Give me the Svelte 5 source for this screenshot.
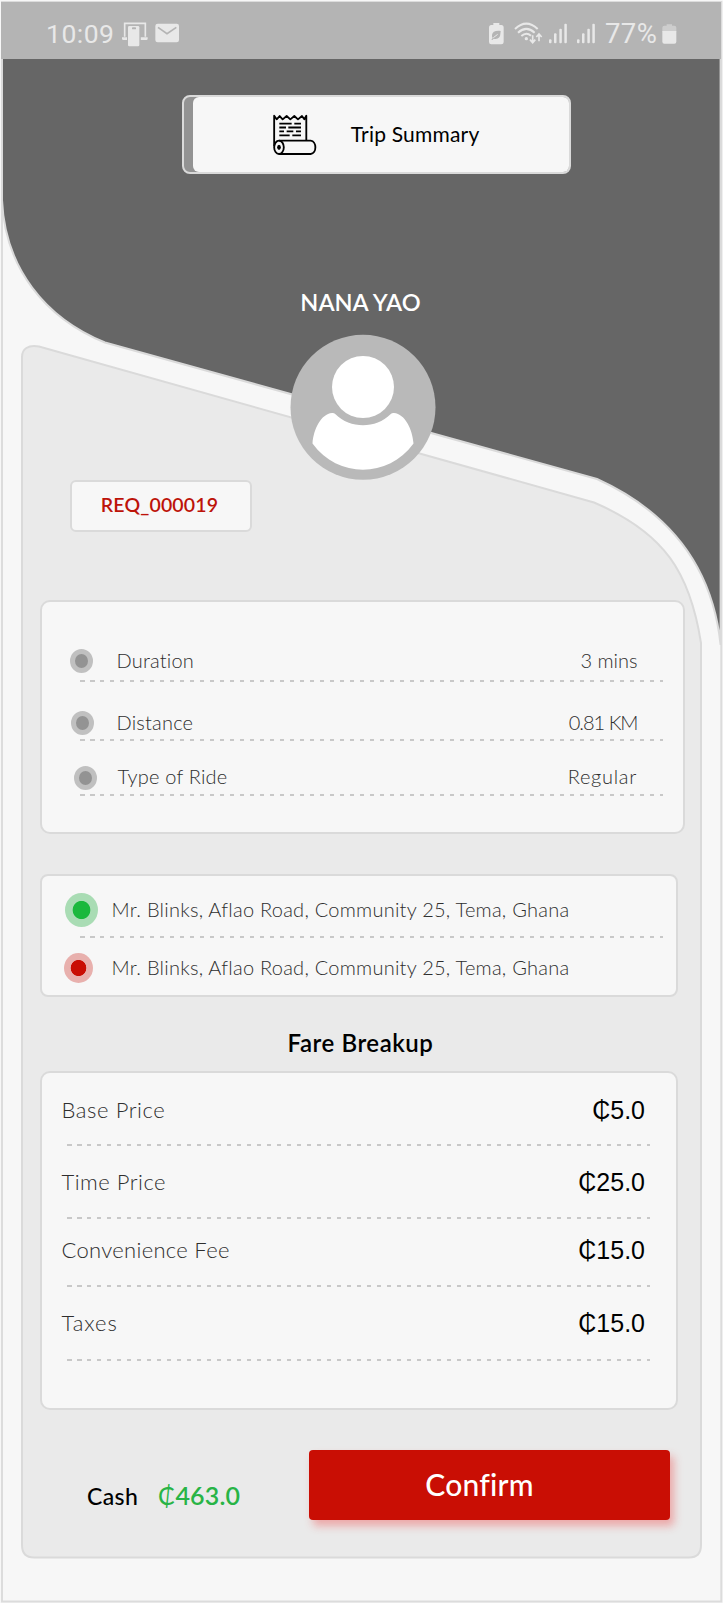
<script>
  const details = [
    { label: 'Duration', value: '3 mins', before: 47, after: 7, dot: 28, text: 12.5, end: 45.5, labelGap: 0.2, valueGap: 0 },
    { label: 'Distance', value: '0.81 KM', before: 29, after: 4, dot: 29, text: 11.5, end: 45.5, labelGap: 0.2, valueGap: -1 },
    { label: 'Type of Ride', value: 'Regular', before: 24, after: 5, dot: 32, text: 9.5, end: 46, labelGap: 0.2, valueGap: 0.7 },
  ];
  const stops = [
    { kind: 'pickup', address: 'Mr. Blinks, Aflao Road, Community 25, Tema, Ghana' },
    { kind: 'dropoff', address: 'Mr. Blinks, Aflao Road, Community 25, Tema, Ghana' },
  ];
  const fares = [
    { label: 'Base Price', value: '5.0', before: 23, after: 20, gap: 0.6 },
    { label: 'Time Price', value: '25.0', before: 22, after: 21, gap: 0.5 },
    { label: 'Convenience Fee', value: '15.0', before: 17, after: 21, gap: 0.3 },
    { label: 'Taxes', value: '15.0', before: 22, after: 22, gap: 1 },
  ];
  const signal = [
    [267, 117, 12],
    [282, 99, 30],
    [298, 85, 44],
    [313, 70, 59],
  ];
</script>

<main class="page">
  <svg class="backdrop" width="723" height="1603" viewBox="0 0 723 1603" aria-hidden="true">
    <rect x="2" y="2" width="719.3" height="1599.5" fill="#f7f7f7" stroke="#dcdcdc" stroke-width="2" />
    <path
      d="M2 50V200C5 268 45 318 105 342.5L597 479C665 510 712 562 720.6 645V50Z"
      fill="#666" stroke="#dadada" stroke-width="2" />
    <path
      d="M22 357C22 349 28 344.5 39 346.5L594 502.5C665 533 690 573 701 643V1545Q701 1557.5 689 1557.5H34Q22 1557.5 22 1545Z"
      fill="#eaeaea" stroke="#dadada" stroke-width="2" />
  </svg>

  <header class="status">
    <span class="clock">10:09</span>
    <svg class="left-icons" width="60" height="26" viewBox="363 65 180 78">
      <path d="M374 112V72H436V112" fill="none" stroke="#e8e8e8" stroke-width="5" />
      <path d="M366 114H386V122H370Q366 122 366 118ZM422 114H443V118Q443 122 439 122H422Z" fill="#e8e8e8" />
      <rect x="381" y="77" width="40" height="66" rx="4" fill="#b4b4b4" />
      <rect x="384" y="80" width="34" height="61" rx="4" fill="#e8e8e8" />
      <rect x="396" y="84" width="12" height="6" rx="2" fill="#b4b4b4" />
      <rect x="466" y="73" width="71" height="56" rx="7" fill="#e8e8e8" />
      <path d="M474 84L501 103L529 84" fill="none" stroke="#b4b4b4" stroke-width="5" />
    </svg>
    <svg class="right-icons" width="110" height="26" viewBox="84 62 330 78">
      <path d="M100 74V68H118V74H124Q131 74 131 82V125Q131 132 124 132H94Q87 132 87 125V82Q87 74 94 74Z" fill="#e8e8e8" />
      <path d="M122 92C106 90 97 95 96 104Q95 109 98 113L94 118L97 119L101 115C114 118 121 111 121 101Z" fill="#b4b4b4" />
      <path d="M100 112L113 102" stroke="#e8e8e8" stroke-width="3" />
      <g fill="none" stroke="#e8e8e8" stroke-width="6">
        <path d="M165 86Q199 54 233 86" />
        <path d="M174 97Q199 74 224 97" />
        <path d="M184 107Q199 94 213 106" />
      </g>
      <circle cx="199" cy="115" r="5" fill="#e8e8e8" />
      <path d="M218 105V126M210 118L218 127L226 118M237 123V102M229 110L237 101L245 110" fill="none" stroke="#e8e8e8" stroke-width="5" />
      {#each [0, 84] as shift}
        {#each signal as [x, y, h]}
          <rect x={x + shift} {y} width="7.5" height={h} rx="3" fill="#e8e8e8" />
        {/each}
      {/each}
    </svg>
    <span class="percent">77%</span>
    <svg class="battery" width="15" height="22" viewBox="605 68 45 66">
      <path d="M606 94V82Q606 76 612 76H619V72H635V76H642Q648 76 648 82V94Z" fill="#cdcdcd" />
      <path d="M606 92H648V124Q648 130 642 130H612Q606 130 606 124Z" fill="#e8e8e8" />
    </svg>
  </header>

  <div class="title">
    <div class="title-face">
      <svg width="48.3" height="45" viewBox="300 95 145 135" fill="none" stroke="#000" stroke-width="5.5" stroke-linejoin="round">
        <path d="M312.500 198V106L320 117L329 107L338 117L350 107L361 117L373 107L384 117L396 107L403 117L409 106V180" />
        <path d="M327 181H422C441 183 441 219 422 221H327" />
        <ellipse cx="327" cy="201" rx="14.500" ry="20" />
        <ellipse cx="327" cy="201" rx="5.500" ry="8" fill="#000" stroke="none" />
        <path d="M328 130H365M373 130H393M328 141.500H348M355 141.500H393M328 153H342M350 153H370M378 153H393M328 165H359M367 165H393" />
      </svg>
      <span>Trip Summary</span>
    </div>
  </div>

  <h1>NANA YAO</h1>

  <svg class="avatar" width="146" height="146" viewBox="0 0 146 146">
    <circle cx="73" cy="73.300" r="72.500" fill="#b9b9b9" />
    <circle cx="73" cy="53" r="31" fill="#fff" />
    <path d="M22.500 109.500C23.500 95 31 80 42 79Q44 78.800 45.500 80.300C60 95 86 95 100.500 80.300Q102 78.800 104 79C115 80 122.500 95 123.500 109.500C98 144.500 48 144.500 22.500 109.500Z" fill="#fff" />
  </svg>

  <div class="request">REQ_000019</div>

  <section class="card details">
    {#each details as row}
      <div class="row" style="margin-top:{row.before}px;padding-left:{row.dot}px;padding-right:{row.end}px">
        <i class="dot"></i>
        <span class="label" style="margin-left:{11 + row.text}px;letter-spacing:{row.labelGap}px">{row.label}</span>
        <span class="value" style="letter-spacing:{row.valueGap}px">{row.value}</span>
      </div>
      <div class="dash" style="margin-top:{row.after}px"></div>
    {/each}
  </section>

  <section class="card stops">
    {#each stops as stop, i}
      {#if i > 0}<div class="dash"></div>{/if}
      <div class="stop {stop.kind}">
        <span class="mark"><i></i></span>
        <span class="address">{stop.address}</span>
      </div>
    {/each}
  </section>

  <h2>Fare Breakup</h2>

  <section class="card fares">
    {#each fares as fare}
      <div class="fare" style="margin-top:{fare.before}px">
        <span class="label" style="letter-spacing:{fare.gap}px">{fare.label}</span>
        <span class="amount"><span class="cedi">₵</span>{fare.value}</span>
      </div>
      <div class="dash" style="margin-top:{fare.after}px"></div>
    {/each}
  </section>

  <footer>
    <span class="cash">Cash</span>
    <span class="total"><span class="cedi">₵</span>463.0</span>
    <button>Confirm</button>
  </footer>
</main>

<style>
  :global(body) {
    margin: 0;
    background: #f7f7f7;
  }
  .page {
    position: relative;
    box-sizing: border-box;
    width: 723px;
    height: 1603px;
    padding-top: 2px;
    overflow: hidden;
    display: flex;
    flex-direction: column;
    font-family: Lato, sans-serif;
    color: #000;
  }
  .backdrop {
    position: absolute;
    inset: 0;
    z-index: -1;
  }
  .status {
    box-sizing: border-box;
    height: 57px;
    margin: 0 2px 0 1px;
    padding: 7px 0 0 45px;
    display: flex;
    align-items: center;
    flex: none;
    background: #b4b4b4;
    color: #e8e8e8;
    font: 400 26.5px/30px Roboto, sans-serif;
  }
  .clock {
    width: 75px;
    letter-spacing: 0.5px;
  }
  .right-icons {
    margin-left: 307px;
  }
  .percent {
    margin-left: 7px;
    width: 57px;
    font-size: 27.5px;
    letter-spacing: 0.4px;
  }
  .title {
    box-sizing: border-box;
    width: 389px;
    height: 79px;
    flex: none;
    margin: 36px 0 0 182px;
    padding-left: 9px;
    border: 2px solid #dadada;
    border-radius: 8px;
    background: #939393;
  }
  .title-face {
    height: 100%;
    border-radius: 6px;
    background: #f7f7f7;
    display: flex;
    align-items: center;
    padding-left: 76.5px;
    box-sizing: border-box;
  }
  .title-face span {
    margin: -2px 0 0 33px;
    font-size: 21px;
    line-height: 26px;
    letter-spacing: 0.2px;
  }
  h1 {
    margin: 112px 2px 0 0;
    height: 33px;
    flex: none;
    text-align: center;
    color: #fff;
    font: 600 23.5px/32px Lato, sans-serif;
  }
  .avatar {
    flex: none;
    margin: 15px 0 0 290px;
  }
  .request {
    box-sizing: border-box;
    flex: none;
    width: 182px;
    height: 52px;
    margin: 0 0 0 70px;
    border: 2px solid #dadada;
    border-radius: 6px;
    background: #f7f7f7;
    color: #bd1309;
    text-align: center;
    padding-right: 3px;
    font-size: 19.5px;
    line-height: 46px;
    font-weight: 600;
    letter-spacing: 0.15px;
  }
  .card {
    box-sizing: border-box;
    flex: none;
    margin-left: 40px;
    width: 638px;
    border: 2px solid #dadada;
    border-radius: 10px;
    background: #f7f7f7;
    color: #2e2e2e;
    font-weight: 300;
  }
  .details {
    width: 645px;
    height: 234px;
    margin-top: 68px;
  }
  .row {
    display: flex;
    align-items: center;
    height: 24px;
    font-size: 20px;
    line-height: 24px;
  }
  .row .label,
  .value,
  .address {
    margin-top: -2px;
  }
  .dot {
    box-sizing: border-box;
    width: 23px;
    height: 24px;
    border: 5.5px solid #c0c0c0;
    border-radius: 50%;
    background: #939393;
  }
  .row:nth-child(5) .dot {
    margin-top: 2px;
  }
  .value {
    margin-left: auto;
  }
  .dash {
    height: 2px;
    margin-left: 38px;
    width: 583px;
    background: repeating-linear-gradient(90deg, #c8c8c8 0 4.5px, transparent 4.5px 10px);
  }
  .stops {
    height: 123px;
    margin-top: 40px;
    padding-top: 17px;
    border-radius: 8px;
  }
  .stop {
    display: flex;
    align-items: center;
    height: 34px;
    padding-left: 21px;
    font-size: 20px;
    letter-spacing: 0.25px;
  }
  .stops .dash {
    margin-top: 9px;
    margin-bottom: 13px;
  }
  .mark {
    width: 37px;
    height: 34px;
    display: flex;
    align-items: center;
    margin-right: 11.5px;
  }
  .mark i {
    border-radius: 50%;
  }
  .pickup .mark i {
    width: 33px;
    height: 34px;
    margin-left: 2px;
    background: radial-gradient(closest-side, #1bb83d 51%, #a9dcb4 56%);
  }
  .dropoff .mark i {
    width: 29px;
    height: 30px;
    margin-left: 1px;
    background: radial-gradient(closest-side, #c90e04 51%, #e8b0ad 56%);
  }
  h2 {
    flex: none;
    margin: 30px 2px 0 0;
    height: 32px;
    text-align: center;
    font: 600 24px/32px Lato, sans-serif;
    letter-spacing: 0.55px;
  }
  .fares {
    height: 339px;
    margin-top: 12px;
  }
  .fare {
    display: flex;
    justify-content: space-between;
    align-items: center;
    height: 28px;
    padding: 0 31px 0 19.5px;
    font-size: 22px;
    line-height: 28px;
  }
  .fares .dash {
    margin-left: 25px;
  }
  .amount {
    color: #000;
    font: 400 25px/28px "Liberation Sans", sans-serif;
  }
  footer {
    flex: none;
    display: flex;
    margin: 40px 0 0 87px;
    height: 70px;
  }
  .cash {
    width: 71px;
    margin-top: 32px;
    font-size: 23px;
    line-height: 28px;
    font-weight: 500;
    letter-spacing: 0.4px;
  }
  .total {
    width: 151px;
    margin-top: 31px;
    color: #28b446;
    font-size: 25px;
    line-height: 28px;
    font-weight: 600;
    letter-spacing: 0.15px;
  }
  .total .cedi {
    font-weight: 400;
  }
  button {
    width: 361px;
    height: 70px;
    padding: 0 20px 2px 0;
    border: 0;
    border-radius: 4px;
    background: #c90e04;
    box-shadow: 4px 6px 8px rgba(240, 60, 60, 0.38);
    color: #fff;
    font: 500 30px/68px Lato, sans-serif;
    letter-spacing: 0.2px;
  }
</style>
